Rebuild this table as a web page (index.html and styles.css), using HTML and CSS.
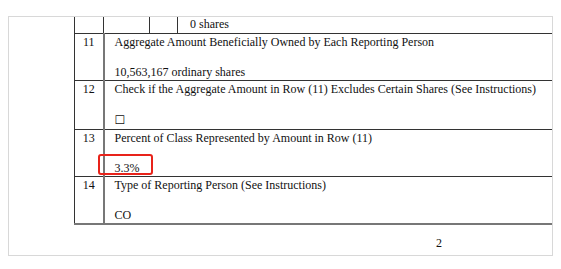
FILE: index.html
```html
<!DOCTYPE html>
<html lang="en">
<head>
    <meta charset="UTF-8">
    <title>Schedule 13G - Page 2</title>
    <link rel="stylesheet" href="styles.css">
</head>
<body>
    <div class="page">
        <table class="cover">
            <colgroup>
                <col class="c-num">
                <col class="c-a">
                <col class="c-b">
                <col>
            </colgroup>
            <tr class="top-row">
                <td></td>
                <td></td>
                <td></td>
                <td class="shares">0 shares</td>
            </tr>
            <tr>
                <td class="num">11</td>
                <td colspan="3" class="item">
                    Aggregate Amount Beneficially Owned by Each Reporting Person<br><br>
                    10,563,167 ordinary shares
                </td>
            </tr>
            <tr>
                <td class="num">12</td>
                <td colspan="3" class="item">
                    Check if the Aggregate Amount in Row (11) Excludes Certain Shares (See Instructions)<br><br>
                    <span class="box">&#9744;</span>
                </td>
            </tr>
            <tr>
                <td class="num">13</td>
                <td colspan="3" class="item">
                    Percent of Class Represented by Amount in Row (11)<br><br>
                    <span class="marked">3.3%</span>
                </td>
            </tr>
            <tr class="last">
                <td class="num">14</td>
                <td colspan="3" class="item">
                    Type of Reporting Person (See Instructions)<br><br>
                    CO
                </td>
            </tr>
        </table>
        <div class="page-no">2</div>
    </div>
</body>
</html>
```

FILE: styles.css
```css
body {
    margin: 0;
    background: #fff;
    font-family: "Liberation Serif", "Times New Roman", serif;
    font-size: 12px;
    color: #111;
}
.page {
    margin: 16px 8px 0;
    height: 238px;
    border: 1px solid #d8d8d8;
    overflow: hidden;
}
.cover {
    margin-left: 65px;
    width: 520px;
    table-layout: fixed;
    border-collapse: collapse;
    line-height: 15px;
}
.c-num { width: 29px; }
.c-a { width: 46px; }
.c-b { width: 28px; }
.cover td {
    border: 1px solid #333;
    padding: 0;
    vertical-align: top;
}
.cover tr.top-row td {
    height: 16px;
    border-top: none;
}
.shares {
    padding-left: 12px !important;
}
.num {
    text-align: center;
    padding-top: 1px !important;
}
.cover td.num + td {
    border-left: 2px solid #777;
}
.item {
    padding: 1px 0 0 10px !important;
    height: 45px;
}
.cover tr.last td {
    border-bottom: 2px solid #777;
    height: 45px;
}
.box {
    font-family: "DejaVu Sans", sans-serif;
    font-size: 12px;
    line-height: 17px;
}
.marked {
    position: relative;
}
/* red highlight drawn round the percentage */
.marked::after {
    content: "";
    position: absolute;
    left: -17px;
    top: -7px;
    width: 51px;
    height: 17px;
    border: 2px solid #e8231a;
    border-radius: 3px;
}
.page-no {
    margin-top: 11px;
    padding-left: 427px;
    line-height: 15px;
}
```
